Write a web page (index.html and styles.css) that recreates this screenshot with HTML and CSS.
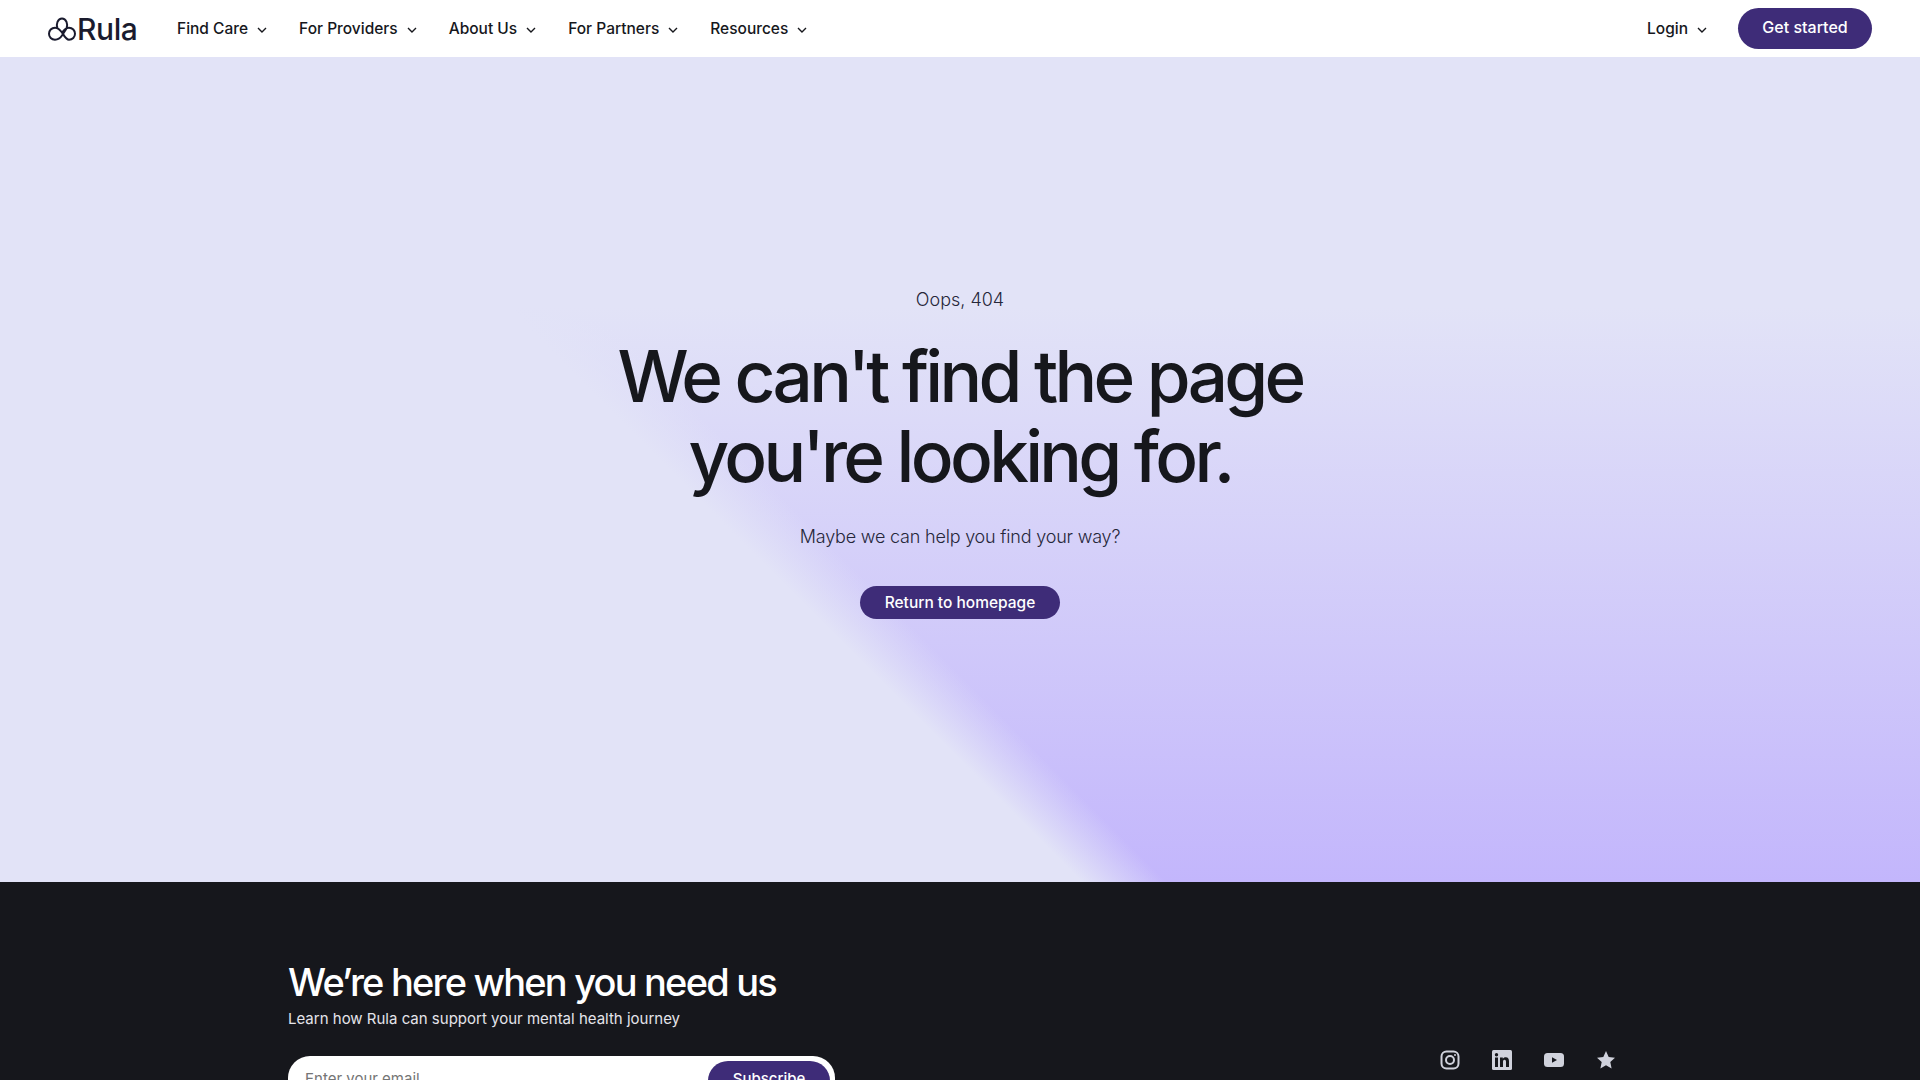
FILE: index.html
```html
<!DOCTYPE html>
<html lang="en">
<head>
    <meta charset="UTF-8">
    <meta name="viewport" content="width=device-width, initial-scale=1.0">
    <title>Rula - Page not found</title>
    <link rel="stylesheet" href="styles.css">
</head>
<body>
    <header class="nav">
        <a class="logo" href="#">
            <svg class="logo-mark" viewBox="0 0 28 24" width="28" height="24" fill="none" stroke="#1a1b2e" stroke-width="2" stroke-linejoin="round">
                <path d="M9.500 11.500C7.500 7 10 1.500 14 1.500S20.500 7 18.500 11.500L14 18.500C12 21.500 9.500 22.700 7 22.700 3.500 22.700 1 20 1 16.800S3.500 10.700 7 10.700C10 10.700 12 12.800 14 15.500 16 18.500 18 22.700 21 22.700 24.500 22.700 27 20 27 16.800S24.500 10.700 21 10.700C18 10.700 16 12.800 14 15.500"/>
            </svg>
            <span class="logo-text">Rula</span>
        </a>
        <nav class="nav-links">
            <a href="#">Find Care <svg class="chev" viewBox="0 0 10 6"><path d="M1 1l4 4 4-4"/></svg></a>
            <a href="#">For Providers <svg class="chev" viewBox="0 0 10 6"><path d="M1 1l4 4 4-4"/></svg></a>
            <a href="#">About Us <svg class="chev" viewBox="0 0 10 6"><path d="M1 1l4 4 4-4"/></svg></a>
            <a href="#">For Partners <svg class="chev" viewBox="0 0 10 6"><path d="M1 1l4 4 4-4"/></svg></a>
            <a href="#">Resources <svg class="chev" viewBox="0 0 10 6"><path d="M1 1l4 4 4-4"/></svg></a>
        </nav>
        <div class="nav-right">
            <a class="login" href="#">Login <svg class="chev" viewBox="0 0 10 6"><path d="M1 1l4 4 4-4"/></svg></a>
            <a class="btn btn-start" href="#">Get started</a>
        </div>
    </header>

    <main class="hero">
        <p class="hero-over">Oops, 404</p>
        <h1>We can't find the page<br>you're looking for.</h1>
        <p class="hero-sub">Maybe we can help you find your way?</p>
        <a class="btn btn-return" href="#">Return to homepage</a>
    </main>

    <footer class="footer">
        <div class="footer-inner">
            <div class="footer-left">
                <h2>We’re here when you need us</h2>
                <p>Learn how Rula can support your mental health journey</p>
                <form class="subscribe">
                    <input type="text" placeholder="Enter your email">
                    <button type="button">Subscribe</button>
                </form>
            </div>
            <div class="social">
                <svg viewBox="0 0 20 20" width="20" height="20" fill="none" stroke="#d0d2dc" stroke-width="2">
                    <rect x="1.500" y="1.500" width="17" height="17" rx="5"/>
                    <circle cx="10" cy="10" r="4"/>
                    <circle cx="15" cy="5" r="1" fill="#d0d2dc" stroke="none"/>
                </svg>
                <svg viewBox="0 0 20 20" width="20" height="20">
                    <rect width="20" height="20" rx="1.500" fill="#d0d2dc"/>
                    <path fill="#16171c" d="M3 7.500h3V17H3zM4.500 3a1.700 1.700 0 1 1 0 3.400 1.700 1.700 0 0 1 0-3.400zM8 7.500h2.800v1.300c.5-.9 1.500-1.500 2.900-1.500 2.600 0 3.300 1.700 3.300 4.100V17h-3v-5c0-1.200-.3-2.200-1.500-2.200S11 10.800 11 12v5H8z"/>
                </svg>
                <svg viewBox="0 0 20 14" width="20" height="14">
                    <rect width="20" height="14" rx="3.500" fill="#d0d2dc"/>
                    <path fill="#16171c" d="M8 4.200 13 7l-5 2.800z"/>
                </svg>
                <svg viewBox="0 0 20 20" width="20" height="20">
                    <path fill="#d0d2dc" d="M10 1l2.700 6 6.300.7-4.700 4.300 1.300 6.500L10 15.300 4.400 18.500 5.700 12 1 7.700 7.300 7z"/>
                </svg>
            </div>
        </div>
    </footer>
</body>
</html>
```

FILE: styles.css
```css
html, body {
    height: 100%;
    overflow: hidden;
}
body {
    margin: 0;
    font-family: Inter, "Noto Sans", sans-serif;
    color: #16171c;
    background-color: #16171c;
}
a {
    color: inherit;
    text-decoration: none;
}
.nav {
    display: flex;
    align-items: center;
    height: 57px;
    padding: 0 48px;
    background-color: #fff;
    box-sizing: border-box;
}
.logo {
    display: flex;
    align-items: center;
    width: 129px;
    color: #1a1b2e;
}
.logo-text {
    font-size: 30px;
    font-weight: 500;
    letter-spacing: -0.4px;
    margin-left: 1px;
}
.nav-links {
    display: flex;
    gap: 32px;
    flex-grow: 1;
}
.nav-links a, .login {
    display: flex;
    align-items: center;
    gap: 9px;
    font-size: 15.5px;
    font-weight: 500;
    padding-bottom: 1px;
}
.chev {
    width: 10px;
    height: 6px;
    margin-top: 3px;
    fill: none;
    stroke: #16171c;
    stroke-width: 1.400;
}
.nav-right {
    display: flex;
    align-items: center;
    gap: 31px;
}
.btn {
    display: flex;
    align-items: center;
    justify-content: center;
    background-color: #3e2c78;
    color: #fff;
    font-weight: 500;
    font-size: 15.5px;
}
.btn-start {
    width: 134px;
    height: 41px;
    border-radius: 21px;
    padding-bottom: 3px;
    box-sizing: border-box;
    font-size: 16px;
}
.hero {
    display: flex;
    flex-direction: column;
    align-items: center;
    height: 825px;
    padding-top: 231px;
    box-sizing: border-box;
    background-color: #e2e3f7;
    background-image:
        linear-gradient(45deg, #e2e3f7 765px, #e2e3f700 825px),
        linear-gradient(180deg, #e2e3f7 250px, #c3b6fc 100%);
}
.hero-over {
    margin: 0;
    font-size: 18px;
    font-weight: 300;
    line-height: 24px;
    color: #26273a;
}
.hero h1 {
    margin: 24px 0 0;
    font-size: 71px;
    font-weight: 500;
    line-height: 80px;
    letter-spacing: -3.700px;
    text-align: center;
}
.hero-sub {
    margin: 29px 0 0;
    font-size: 18px;
    font-weight: 300;
    line-height: 24px;
    letter-spacing: -0.2px;
    color: #26273a;
}
.btn-return {
    width: 200px;
    height: 33px;
    margin-top: 37px;
    border-radius: 17px;
    padding-bottom: 1px;
    box-sizing: border-box;
}
.footer {
    height: 400px;
    background-color: #16171c;
    color: #fff;
}
.footer-inner {
    display: flex;
    justify-content: space-between;
    padding: 77px 304px 0 288px;
}
.footer-left {
    width: 547px;
}
.footer h2 {
    margin: 0;
    font-size: 38px;
    font-weight: 500;
    line-height: 46px;
    letter-spacing: -1.800px;
}
.footer p {
    margin: 3px 0 0;
    font-size: 15px;
    line-height: 22px;
    color: #e4e4ea;
}
.subscribe {
    display: flex;
    justify-content: space-between;
    align-items: flex-start;
    height: 50px;
    margin-top: 26px;
    padding: 5px;
    background-color: #fff;
    border-radius: 22px;
    box-sizing: border-box;
}
.subscribe input {
    height: 34px;
    padding: 0;
    border: none;
    outline: none;
    margin-left: 12px;
    font: 15px Inter, sans-serif;
    flex-grow: 1;
}
.subscribe button {
    width: 122px;
    height: 40px;
    padding: 0 0 6px;
    border: none;
    border-radius: 20px;
    background-color: #3e2c78;
    color: #fff;
    font: 500 15px Inter, sans-serif;
}
.social {
    display: flex;
    align-items: center;
    gap: 32px;
    height: 20px;
    margin-top: 91px;
}
```
